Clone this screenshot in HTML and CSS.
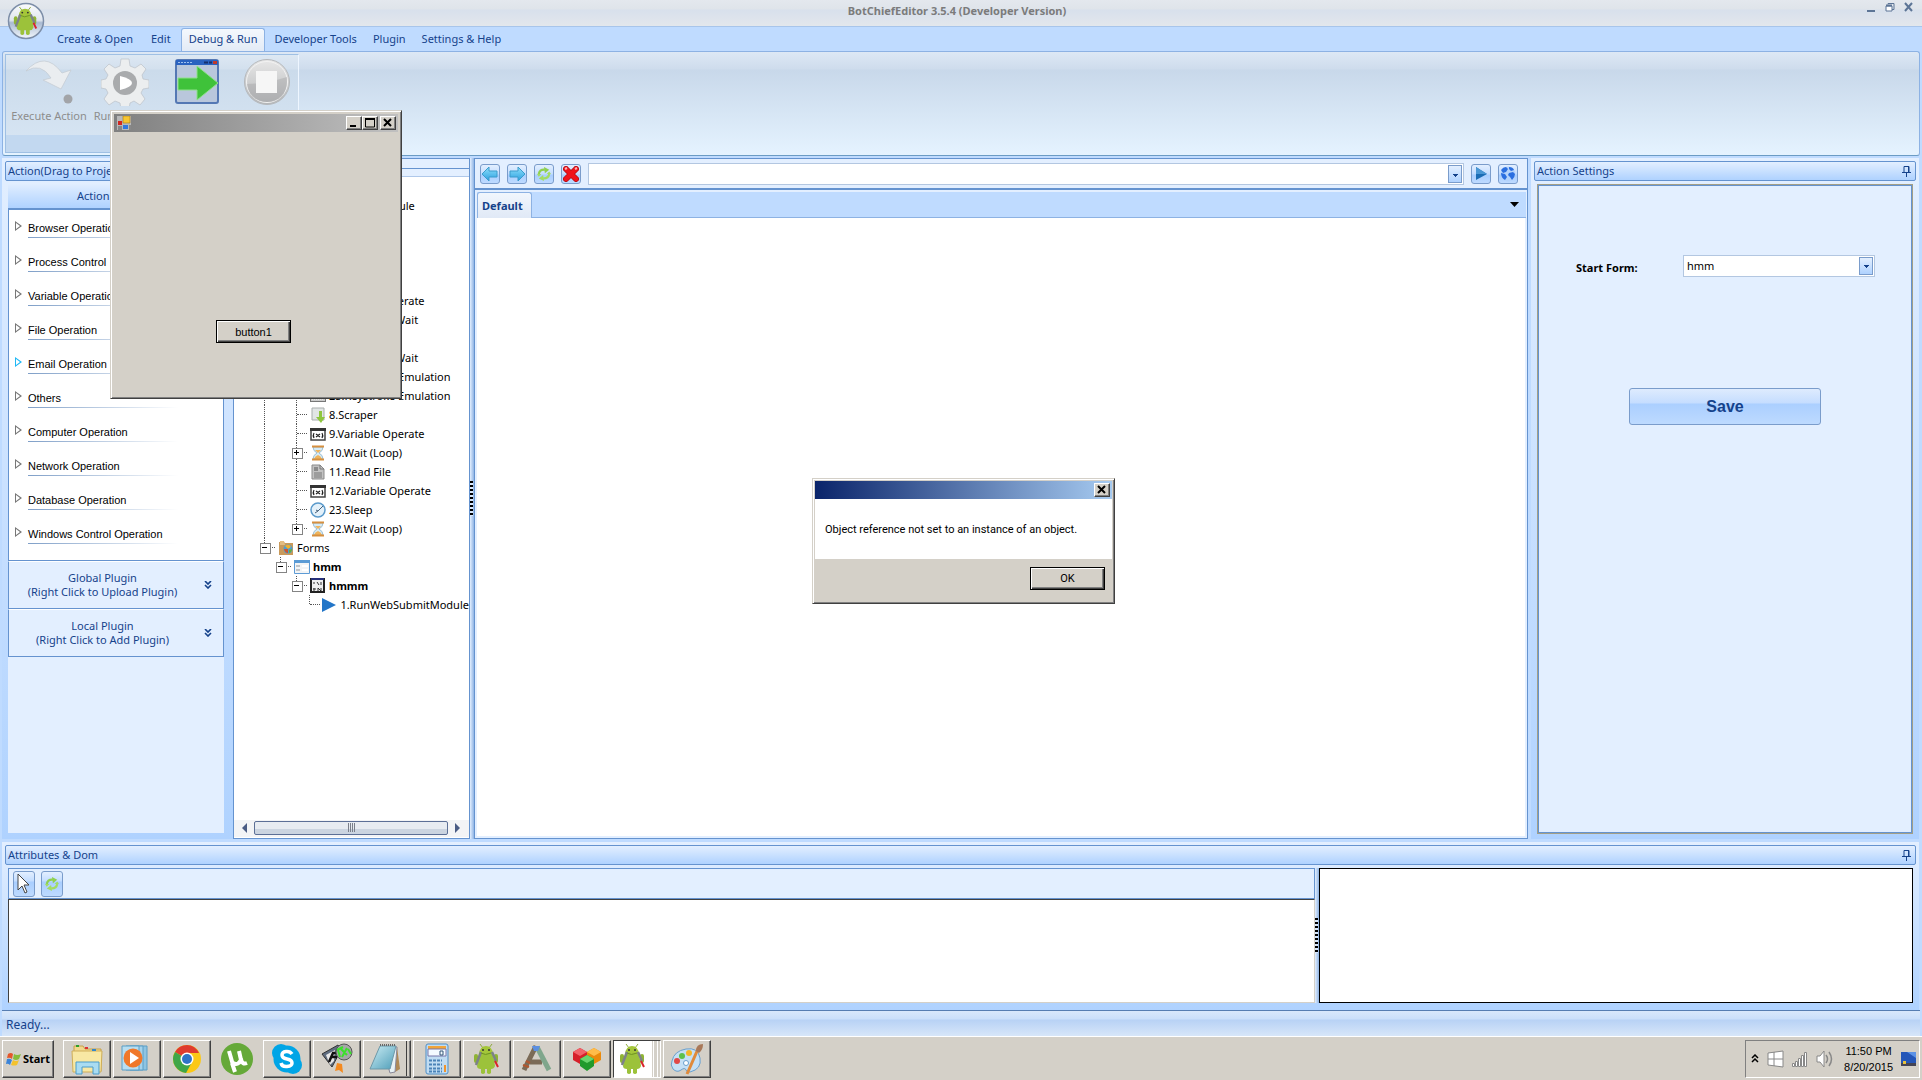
FILE: index.html
```
<!DOCTYPE html>
<html lang="en">
<head>
    <meta charset="utf-8">
    <title>BotChiefEditor 3.5.4 (Developer Version)</title>
    <link rel="stylesheet" href="styles.css">
</head>
<body>

<svg width="0" height="0" class="defs">
    <defs>
        <linearGradient id="gblue" x1="0" y1="0" x2="0" y2="1"><stop offset="0" stop-color="#8fe0fb"/><stop offset="1" stop-color="#2a9fe0"/></linearGradient>
        <linearGradient id="ggrey" x1="0" y1="0" x2="0" y2="1"><stop offset="0" stop-color="#e8e8e8"/><stop offset="1" stop-color="#b4b6b8"/></linearGradient>
        <linearGradient id="gpage" x1="0" y1="0" x2="1" y2="1"><stop offset="0" stop-color="#cdeef5"/><stop offset="1" stop-color="#4d9db8"/></linearGradient>
        <linearGradient id="gorb" x1="0" y1="0" x2="0" y2="1"><stop offset="0" stop-color="#fbfcfd"/><stop offset=".48" stop-color="#dfe5ee"/><stop offset=".55" stop-color="#a9bad2"/><stop offset="1" stop-color="#f4f8fc"/></linearGradient>
        <symbol id="android" viewBox="0 0 30 30">
            <path d="M8 0l3 4M20 0l-3 4" stroke="#8cab38" stroke-width="1"/>
            <path d="M7 10q1-8 7-8t7 8z" fill="#a4c639"/>
            <circle cx="11" cy="6" r="1" fill="#333"/><circle cx="17" cy="6" r="1" fill="#333"/>
            <path d="M7 9h14l2 13q-1 3-4 3v4q-2 2-4 0v-4h-2v4q-2 2-4 0v-4q-4 0-4-3z" fill="#9cc23a"/>
            <rect x="2" y="10" width="4" height="9" rx="2" fill="#8fb434"/><rect x="22" y="10" width="4" height="9" rx="2" fill="#8fb434"/>
            <path d="M4 21l5-13M20 8l4 9" stroke="#7d8288" stroke-width="2.500"/>
            <path d="M23 17l3 6" stroke="#d9232c" stroke-width="2"/>
            <path d="M9 9q4 3 10 0" stroke="#6f9421" fill="none"/>
        </symbol>
        <symbol id="recycle" viewBox="0 0 16 16">
            <path d="M2 8Q3 3 8 3h1" fill="none" stroke="#8fd04f" stroke-width="2.500"/>
            <path d="M8 0l6 3-5 4z" fill="#8fd04f"/>
            <path d="M14 8q-1 5-6 5H7" fill="none" stroke="#a3dc62" stroke-width="2.500"/>
            <path d="M8 16l-6-3 5-4zM0 8h5L2 11zM11 8h5l-2-3z" fill="#a3dc62"/>
        </symbol>
        <symbol id="pin" viewBox="0 0 9 11"><path d="M2 .500h5v6H2zM0 6.500h9M4.500 7v4M6.500 1v6" stroke="#15428b" fill="none"/></symbol>
        <symbol id="hourglass" viewBox="0 0 16 16">
            <path d="M3 2q0 4 4 6-4 2-4 6h10q0-4-4-6 4-2 4-6z" fill="#d5ebf7" stroke="#84acc4" stroke-width=".7"/>
            <path d="M5 5h6L8 8zM4 14q1-3 4-4 3 1 4 4z" fill="#efb45d"/>
            <path d="M2 1.500h12M2 14.500h12" stroke="#d68f3f" stroke-width="2"/>
        </symbol>
        <symbol id="variable" viewBox="0 0 16 16">
            <path d="M1 3h14v11H1z" fill="#fff" stroke="#444" stroke-width="1.500"/><path d="M0 2h16v3H0z" fill="#333"/>
            <path d="M4 7q-1.500 2.500 0 5M12 7q1.500 2.500 0 5M6 8l4 3M10 8l-4 3" stroke="#222" fill="none" stroke-width="1.200"/>
        </symbol>
        <symbol id="keyboard" viewBox="0 0 16 16"><rect x=".5" y="4.500" width="15" height="9" fill="#ccc" stroke="#777"/><path d="M2 7h12M2 9h12M2 11h12" stroke="#fff" stroke-dasharray="1 1"/></symbol>
        <symbol id="chevrons" viewBox="0 0 8 8"><path d="M1 0l3 3 3-3M1 4l3 3 3-3" fill="none" stroke="#15428b" stroke-width="1.600"/></symbol>
    </defs>
</svg>

<div class="titlebar">
    <span></span>
    <h1>BotChiefEditor 3.5.4 (Developer Version)</h1>
    <div class="winbuttons">
        <svg width="10" height="12"><path d="M1 10h8" stroke="#5d7596" stroke-width="2"/></svg>
        <svg width="10" height="12"><path d="M3 3.500V2.500h6v6H7" fill="none" stroke="#5d7596"/><path d="M1 5h6v5H1z" fill="#fff" stroke="#5d7596"/><path d="M1 4.500h6" stroke="#5d7596" stroke-width="2"/></svg>
        <svg width="10" height="12"><path d="M1 2l7 8M8 2l-7 8" stroke="#5d7596" stroke-width="2"/></svg>
    </div>
    <button class="orb" aria-label="Menu">
        <svg width="38" height="38" viewBox="0 0 38 38"><circle cx="19" cy="19" r="17.500" fill="url(#gorb)" stroke="#7d8ea8" stroke-width="1.500"/><use href="#android" x="5" y="5" width="28" height="28"/></svg>
    </button>
</div>

<nav class="tabs">
    <a href="#">Create &amp; Open</a>
    <a href="#">Edit</a>
    <a href="#" class="active">Debug &amp; Run</a>
    <a href="#">Developer Tools</a>
    <a href="#">Plugin</a>
    <a href="#">Settings &amp; Help</a>
</nav>

<div class="ribbon">
    <div class="group">
        <div class="tools">
            <button class="tool">
                <svg width="48" height="48" viewBox="0 0 48 48"><path d="M1 13Q20-8 37 15l9-3-10 19-18-9 8-2Q16 4 1 13z" fill="#eaedf0" stroke="#c3cad1" stroke-width=".7"/><circle cx="43" cy="41" r="4.500" fill="#a2a4a8"/></svg>
                Execute Action
            </button>
            <button class="tool">
                <svg width="48" height="48" viewBox="0 0 48 48">
                    <path d="M20 1h8l1 7 5 2 6-4 5 5-4 6 1 4 6 1v8l-6 1-2 4 4 6-5 6-6-4-4 2-1 6h-8l-1-6-5-2-6 4-5-6 4-6-2-4-5-1v-8l5-1 2-4-4-6 5-5 6 4 5-2z" fill="#eceeef" stroke="#bcc2c8" stroke-width=".7"/>
                    <circle cx="24" cy="25" r="12" fill="#a9abad"/><path d="M19 18q12 3 12 7t-12 7z" fill="#fff"/>
                </svg>
                Run Module
            </button>
            <button class="tool" aria-label="Application">
                <svg width="44" height="46" viewBox="0 0 44 46"><rect x="1" y="2" width="42" height="43" rx="2" fill="#b9c7dc" stroke="#5478b4" stroke-width="2"/><path d="M1 2h42v5H1z" fill="#2a62c0"/><path d="M3 4.500h15" stroke="#9fc0ee" stroke-dasharray="2 1"/><path d="M29 4.500h4M34 4.500h3" stroke="#16316e" stroke-width="2"/><path d="M38 3h4v3h-4z" fill="#c0392b"/><path d="M3 20h19V8l21 17-21 17V32H3z" fill="#3fc23a" stroke="#8fe08a" stroke-width="1"/></svg>
            </button>
            <button class="tool" aria-label="Stop">
                <svg width="48" height="48" viewBox="0 0 48 48"><circle cx="24" cy="24" r="22.500" fill="url(#ggrey)" stroke="#b5b8bb"/><circle cx="24" cy="24" r="20.500" fill="none" stroke="#f2f2f2"/><path d="M4 26q18 0 40-7 1 25-20 25-18 0-20-18z" fill="#9fa1a3" opacity=".4"/><path d="M13 13h21v22H13z" fill="#f6f6f6"/></svg>
            </button>
        </div>
        <div class="groupfoot"></div>
    </div>
</div>

<div class="workspace">

    <div class="actions">
        <h2 class="panelhead">Action(Drag to Project)</h2>
        <div class="accordion">
            <button class="acchead">Action</button>
            <ul class="oplist">
                <li>Browser Operation</li>
                <li>Process Control</li>
                <li>Variable Operation</li>
                <li>File Operation</li>
                <li class="hot">Email Operation</li>
                <li>Others</li>
                <li>Computer Operation</li>
                <li>Network Operation</li>
                <li>Database Operation</li>
                <li>Windows Control Operation</li>
            </ul>
            <button class="plugin"><span>Global Plugin<br>(Right Click to Upload Plugin)</span><svg width="8" height="8"><use href="#chevrons"/></svg></button>
            <button class="plugin"><span>Local Plugin<br>(Right Click to Add Plugin)</span><svg width="8" height="8"><use href="#chevrons"/></svg></button>
        </div>
    </div>

    <div class="project">
        <div class="projecthead"></div>
        <ul class="tree">
            <li><i class="trunk"></i><i></i><i></i></li>
            <li><i class="trunk"></i><i class="toggle">−</i><svg></svg>WebSubmit Module</li>
            <li><i class="trunk"></i></li>
            <li><i class="trunk"></i></li>
            <li><i class="trunk"></i></li>
            <li><i class="trunk"></i></li>
            <li><i class="trunk"></i><i></i><i class="trunk tee"></i><svg><use href="#variable"/></svg>2.Variable Operate</li>
            <li><i class="trunk"></i><i></i><i class="trunk tee"></i><svg><use href="#hourglass"/></svg>3.Page Load Wait</li>
            <li><i class="trunk"></i><i></i><i class="trunk"></i></li>
            <li><i class="trunk"></i><i></i><i class="trunk tee"></i><svg><use href="#hourglass"/></svg>5.Page Load Wait</li>
            <li><i class="trunk"></i><i></i><i class="trunk tee"></i><svg><use href="#keyboard"/></svg>24.Keystroke Emulation</li>
            <li><i class="trunk"></i><i></i><i class="trunk tee"></i><svg><use href="#keyboard"/></svg>25.Keystroke Emulation</li>
            <li><i class="trunk"></i><i></i><i class="trunk tee"></i><svg viewBox="0 0 16 16"><path d="M2 1h12v12H2z" fill="#e2e6e6" stroke="#a8adad"/><path d="M9 4h3v6h3l-4 6-5-6h3z" fill="#8ec63f"/></svg>8.Scraper</li>
            <li><i class="trunk"></i><i></i><i class="trunk tee"></i><svg><use href="#variable"/></svg>9.Variable Operate</li>
            <li><i class="trunk"></i><i></i><i class="trunk toggle">+</i><svg><use href="#hourglass"/></svg>10.Wait (Loop)</li>
            <li><i class="trunk"></i><i></i><i class="trunk tee"></i><svg viewBox="0 0 16 16"><path d="M2 1h8l4 4v10H2z" fill="#c2c2c2" stroke="#8b8b8b"/><path d="M4 3h4v4H4z" fill="#8a8a8a"/><path d="M4 9h8M4 11h8M4 13h8M10 1v4h4" stroke="#777" fill="none"/></svg>11.Read File</li>
            <li><i class="trunk"></i><i></i><i class="trunk tee"></i><svg><use href="#variable"/></svg>12.Variable Operate</li>
            <li><i class="trunk"></i><i></i><i class="trunk tee"></i><svg viewBox="0 0 16 16"><circle cx="8" cy="8" r="7" fill="#e4f1fa" stroke="#5a9acb" stroke-width="1.500"/><path d="M13 4L8 9l-2-1M5 11l3-2" stroke="#47617a" fill="none"/></svg>23.Sleep</li>
            <li><i class="trunk"></i><i></i><i class="trunk toggle last">+</i><svg><use href="#hourglass"/></svg>22.Wait (Loop)</li>
            <li><i class="trunk toggle last">−</i><svg viewBox="0 0 16 16"><path d="M1 2h5l1 1h8v12H1z" fill="#c99a5b"/><path d="M2 1h4l1 4H2z" fill="#e3bd81"/><circle cx="10" cy="9" r="4.500" fill="#4b9ed4"/><path d="M7 6q4-3 6 1l-3 2z" fill="#f1b12c"/><path d="M6 9l4 0 0 4q-3 0-4-4z" fill="#d4542c"/><path d="M11 10l3-1q0 3-3 4z" fill="#68ad3b"/></svg>Forms</li>
            <li class="bold"><i></i><i class="trunk toggle last">−</i><svg viewBox="0 0 16 16"><path d="M.500 1.500h15v13H.500z" fill="#f2f4f6" stroke="#5d9bd5"/><path d="M0 1h16v3H0z" fill="#5b9bd5"/><path d="M2 7h4M2 11h4" stroke="#c0c4c8" stroke-width="2"/><path d="M8 6h6v2H8zM8 10h6v2H8z" fill="#fff"/></svg>hmm</li>
            <li class="bold"><i></i><i></i><i class="trunk toggle last">−</i><svg viewBox="0 0 16 16"><path d="M1 1h13v13H1z" fill="#eee" stroke="#222" stroke-width="2"/><path d="M1 1h13" stroke="#26307a" stroke-width="2"/><path d="M3 5h2M7 4l2 3M11 4v3M4 10v3M3 11h3M8 13v-3l3 3v-3" stroke="#333" fill="none"/></svg>hmmm</li>
            <li><i></i><i></i><i></i><i class="trunk tee last"></i><svg viewBox="0 0 16 16"><path d="M1 1l14 7-14 7z" fill="#2376c8"/></svg>1.RunWebSubmitModule</li>
        </ul>
        <div class="hscroll">
            <svg width="7" height="10"><path d="M6 0v10L1 5z" fill="#4a5c84"/></svg>
            <div class="thumb"><i></i><i></i><i></i><i></i></div>
            <svg width="7" height="10"><path d="M1 0v10l5-5z" fill="#4a5c84"/></svg>
        </div>
    </div>

    <div class="splitter"><i></i></div>

    <div class="browser">
        <div class="address">
            <button class="ibtn" aria-label="Back"><svg width="16" height="16"><path d="M0 8l7-7v4h8v6H7v4z" fill="url(#gblue)" stroke="#3a9ccc"/></svg></button>
            <button class="ibtn" aria-label="Forward"><svg width="16" height="16"><path d="M16 8L9 1v4H1v6h8v4z" fill="url(#gblue)" stroke="#3a9ccc"/></svg></button>
            <button class="ibtn" aria-label="Refresh"><svg width="14" height="14"><use href="#recycle"/></svg></button>
            <button class="ibtn" aria-label="Stop loading"><svg width="16" height="16"><path d="M3 3l10 10M13 3L3 13" stroke="#b40f16" stroke-width="6" stroke-linecap="round"/><path d="M3 3l10 10M13 3L3 13" stroke="#f0131c" stroke-width="4.500" stroke-linecap="round"/><path d="M12 3l2-1M2 3l2-1" stroke="#ffb3b5" stroke-width="2"/></svg></button>
            <div class="combo wide">
                <input type="text" aria-label="Address">
                <button class="drop" aria-label="History"></button>
            </div>
            <button class="ibtn" aria-label="Go"><svg width="14" height="16"><path d="M2 1l11 7-11 6z" fill="#1b6db5"/><path d="M2 1l11 7H2z" fill="#4a97d4"/></svg></button>
            <button class="ibtn" aria-label="Open in browser"><svg width="16" height="16"><circle cx="8" cy="8" r="7.500" fill="#b4d3fb"/><path d="M1 4q2-3 5-3l2 2-2 3-3 1zM1 7l4 1 2 3-2 3Q1 12 1 7zM9 1q4 0 5 3l-3 1-2-2zM9 7l4-1 2 2q0 3-3 6l-2-3-2-2z" fill="#2b6fe0"/></svg></button>
        </div>
        <div class="doctabs">
            <button class="doctab">Default</button>
            <svg width="9" height="6"><path d="M0 0h9L4.500 5z" fill="#000"/></svg>
        </div>
        <div class="page"></div>
    </div>

    <div class="settings">
        <h2 class="panelhead">Action Settings <svg width="9" height="11"><use href="#pin"/></svg></h2>
        <form class="settingsbox">
            <div class="field">
                <label for="startform">Start Form:</label>
                <select id="startform" class="combo"><option>hmm</option></select>
            </div>
            <button type="button" class="save">Save</button>
        </form>
    </div>
</div>

<div class="attributes">
    <h2 class="panelhead">Attributes &amp; Dom <svg width="9" height="11"><use href="#pin"/></svg></h2>
    <div class="attrbody">
        <div class="attrleft">
            <div class="attrtools">
                <button class="ibtn tall" aria-label="Pick"><svg width="14" height="22"><path d="M1 1v16l4-4 3 7 2-1-3-7h5z" fill="#fff" stroke="#444"/></svg></button>
                <button class="ibtn tall" aria-label="Reload"><svg width="14" height="14"><use href="#recycle"/></svg></button>
            </div>
            <div class="attrlist"></div>
        </div>
        <div class="splitter thin"><i></i></div>
        <div class="attrdom"></div>
    </div>
</div>

<div class="status">Ready...</div>

<div class="taskbar">
    <button class="start">
        <svg width="16" height="14" viewBox="0 0 16 14"><path d="M2 2q3-2 5 0L6 7Q4 5 1 6z" fill="#e4572b"/><path d="M8 2q3 2 7 0l-2 5q-3 2-6 0z" fill="#86bc3a"/><path d="M1 7q3-1 5 1l-2 5q-2-2-4-1z" fill="#3b84d8"/><path d="M7 8q3 2 6 0l-2 5q-3 1-6 0z" fill="#f4c22c"/></svg>
        Start
    </button>
    <button class="task" aria-label="Explorer"><svg width="34" height="32" viewBox="0 0 34 32"><path d="M4 3h9l2 3h16v22H4z" fill="#f1d88c" stroke="#c6a04b"/><path d="M2 8h30l-1 21H3z" fill="#f8e8a4" stroke="#cfae58"/><path d="M6 3h3" stroke="#2ca02c" stroke-width="2"/><path d="M15 5h3" stroke="#d33" stroke-width="2"/><path d="M22 7h4" stroke="#38c" stroke-width="2"/><path d="M6 31V19h23v12h-6v-7H12v7z" fill="#a9dcf2" stroke="#4a9ccb"/></svg></button>
    <button class="task" aria-label="Media player"><svg width="32" height="30" viewBox="0 0 32 30"><path d="M9 2h17v24H9z" fill="#8fc4e2" stroke="#5b9ec6"/><path d="M5 2h17v24H5z" fill="#a5d3ec" stroke="#5b9ec6"/><path d="M1 2h17v24H1z" fill="#b8def1" stroke="#5b9ec6"/><circle cx="12" cy="14" r="9.500" fill="#f0782a"/><path d="M9 8l9 6-9 6z" fill="#fff"/></svg></button>
    <button class="task" aria-label="Chrome"><svg width="30" height="30" viewBox="0 0 30 30"><circle cx="15" cy="15" r="14" fill="#fbc816"/><path d="M15 15L3 8Q7 1 15 1t12 8H15z" fill="#df3b2f"/><path d="M3 8q-4 7 0 14 4 6 11 7l6-11-5-3z" fill="#3fa648"/><circle cx="15" cy="15" r="6.500" fill="#fff"/><circle cx="15" cy="15" r="5" fill="#2f74c8"/></svg></button>
    <button class="task flat" aria-label="uTorrent"><svg width="32" height="32" viewBox="0 0 32 32"><circle cx="16" cy="16" r="16" fill="#65a938"/><path d="M8 8l4 14M12 20q5 3 8-3l-2-9M20 16q1 6 6 4M11 20l3 9" stroke="#fff" stroke-width="4" fill="none"/></svg></button>
    <button class="task" aria-label="Skype"><svg width="30" height="30" viewBox="0 0 30 30"><circle cx="9" cy="9" r="9" fill="#00a5e6"/><circle cx="21" cy="21" r="9" fill="#00a5e6"/><circle cx="15" cy="15" r="13.500" fill="#00a5e6"/><path d="M20 10q-2-3-6-2.500-4 .500-4 3.500t5 4 5 4-5 3.500-6-3.500" fill="none" stroke="#fff" stroke-width="3.500"/></svg></button>
    <button class="task" aria-label="FlashFXP"><svg width="32" height="32" viewBox="0 0 32 32"><path d="M1 11L17 2l3 5-9 17z" fill="#5f6d80" stroke="#333"/><path d="M5 12l9-5-1 11-4 4z" fill="#e8e8e8"/><path d="M8 19l4-9h6M10 14h6" stroke="#111" stroke-width="2.500" fill="none"/><circle cx="23" cy="9" r="8" fill="#a6a8a8" stroke="#555"/><path d="M16 7l6-3M17 7l2 7M20 6l6 6M26 5l-5 9M27 6l3 5" stroke="#3be02b" stroke-width="2"/><path d="M16 20l5 1 1 9-4-3-4 1z" fill="#f48a1f"/></svg></button>
    <button class="task stack" aria-label="Notepad"><svg width="32" height="32" viewBox="0 0 32 32"><path d="M28 4l3 22-5 3z" fill="#b08a56"/><path d="M13 3l15 1-2 25-5 1z" fill="#e8f2f5" stroke="#889"/><path d="M11 3h16l-6 23H1z" fill="url(#gpage)" stroke="#6d98a8"/><path d="M11 2h16" stroke="#666" stroke-width="2" stroke-dasharray="1 1"/></svg></button>
    <button class="task" aria-label="Calculator"><svg width="24" height="32" viewBox="0 0 24 32"><rect x="1" y="1" width="22" height="30" rx="2" fill="#c0dcf2" stroke="#4e8fc7"/><path d="M3 3h18v3H3z" fill="#f0a43a"/><path d="M3 6h18v7H3z" fill="#f4faff" stroke="#77a"/><path d="M15 8h3v4h-3z" fill="none" stroke="#357"/><path d="M4 17.500h13M4 21.500h13M4 25.500h13M4 28.500h13" stroke="#4b83b8" stroke-width="2" stroke-dasharray="3 1"/><path d="M19 22h2v7h-2z" fill="#f0932b"/></svg></button>
    <button class="task" aria-label="BotChief"><svg width="30" height="30"><use href="#android"/></svg></button>
    <button class="task" aria-label="ARK"><svg width="32" height="30" viewBox="0 0 32 30"><path d="M15 2L3 26M9 18h12" stroke="#7b6b57" stroke-width="5"/><path d="M16 3l12 23" stroke="#7fa68c" stroke-width="5"/><path d="M2 21l6 2M5 17l4 2" stroke="#b3562e" stroke-width="2"/><path d="M11 2h8l-2 5h-4z" fill="#5b8fe0"/></svg></button>
    <button class="task" aria-label="Cubes"><svg width="30" height="26" viewBox="0 0 30 26"><path d="M1 6l7-4 7 4v8l-7 4-7-4z" fill="#d6202a"/><path d="M1 6l7-4 7 4-7 4z" fill="#f2636a"/><path d="M15 6l7-4 7 4v8l-7 4-7-4z" fill="#ea8a0c"/><path d="M15 6l7-4 7 4-7 4z" fill="#ffbc4a"/><path d="M8 13l7-4 7 4v7l-7 5-7-5z" fill="#219a2c"/><path d="M8 13l7-4 7 4-7 4z" fill="#69d46c"/></svg></button>
    <button class="task active" aria-label="BotChief Editor"><svg width="30" height="30"><use href="#android"/></svg></button>
    <button class="task" aria-label="Paint"><svg width="34" height="32" viewBox="0 0 34 32"><path d="M2 18Q4 8 16 6t14 9-10 14q-3 1-4-2t-5 0-8-1q-3-4-1-8z" fill="#c5e0f5" stroke="#6a9fcc"/><circle cx="7" cy="18" r="3" fill="#e04848"/><circle cx="12" cy="13" r="3" fill="#5ec04c"/><circle cx="19" cy="10" r="3" fill="#f5b52a"/><circle cx="16" cy="20" r="2.500" fill="#fff" stroke="#6a9fcc"/><path d="M28 6L17 31" stroke="#e08a3a" stroke-width="3"/><path d="M26 8q0-7 7-7 0 6-4 9z" fill="#a9795a"/></svg></button>
    <div class="tray">
        <svg width="8" height="10"><path d="M1 4l3-3 3 3M1 8l3-3 3 3" fill="none" stroke="#000" stroke-width="1.500"/></svg>
        <svg width="17" height="18"><path d="M1 3l15-2v16L1 15zM7 2v14M1 9h15" fill="#fff" stroke="#888"/></svg>
        <svg width="16" height="16"><path d="M.500 12.500h2v3h-2zM3.500 10.500h2v5h-2zM6.500 7.500h2v8h-2zM9.500 4.500h2v11h-2zM12.500 1.500h2v14h-2z" fill="#fff" stroke="#888"/></svg>
        <svg width="17" height="18"><path d="M1 6h3l4-5v16l-4-5H1z" fill="#fff" stroke="#888"/><path d="M10 5q3 4 0 8M13 2q5 7 0 14" fill="none" stroke="#888" stroke-width="1.500"/></svg>
        <div class="clock">11:50 PM<br>8/20/2015</div>
        <svg width="15" height="16"><path d="M0 1h15v11H0z" fill="#2456b8"/><path d="M6 1h9v6z" fill="#5c92e6"/><path d="M0 12h15v3H0z" fill="#445"/><path d="M2 10h3v3H2z" fill="#e8c23a"/></svg>
    </div>
</div>

<div class="window form">
    <div class="caption">
        <svg width="14" height="14"><path d="M0 0h14v14H0z" fill="#b8b8b8"/><path d="M6 0h7v7H6z" fill="#f7c531" stroke="#a77a10" stroke-width=".6"/><path d="M1 5h4v4H1z" fill="#d3271f"/><path d="M6 9h5v4H6z" fill="#2f78e0"/><path d="M1 10h4v4H1zM12 9h2v5h-2z" fill="#888"/></svg>
        <span></span>
        <button aria-label="Minimize"><svg width="10" height="10"><path d="M1 8h6" stroke="#000" stroke-width="2"/></svg></button>
        <button aria-label="Maximize"><svg width="10" height="10"><path d="M.500 1h9v8h-9z" fill="none" stroke="#000"/><path d="M0 1h10" stroke="#000" stroke-width="2"/></svg></button>
        <button class="close" aria-label="Close"><svg width="10" height="10"><path d="M1 1l7 7M8 1L1 8" stroke="#000" stroke-width="2"/></svg></button>
    </div>
    <div class="formbody"><button class="classic">button1</button></div>
</div>

<div class="window msgbox">
    <div class="caption">
        <span></span>
        <button class="close" aria-label="Close"><svg width="10" height="10"><path d="M1 1l7 7M8 1L1 8" stroke="#000" stroke-width="2"/></svg></button>
    </div>
    <p>Object reference not set to an instance of an object.</p>
    <div class="msgfoot"><button class="classic">OK</button></div>
</div>

</body>
</html>
```
FILE: styles.css
```
* {
    box-sizing: border-box;
}

body {
    margin: 0;
    height: 100vh;
    display: flex;
    flex-direction: column;
    overflow: hidden;
    background: #bfdbff;
    color: #000000;
    font-family: "Noto Sans", "Open Sans", sans-serif;
    font-size: 11px;
    line-height: 14px;
}

button, input, select {
    font: inherit;
    color: inherit;
    margin: 0;
    padding: 0;
    border: none;
    background: none;
}

h1, h2, ul, p {
    margin: 0;
    padding: 0;
    font-size: 11px;
    list-style: none;
}

svg {
    flex: none;
    display: block;
}

.defs {
    position: absolute;
}

/* title bar and ribbon */

.titlebar {
    position: relative;
    flex: none;
    height: 27px;
    display: grid;
    grid-template-columns: 1fr auto 1fr;
    align-items: start;
    padding: 0 8px 0 0;
    background: linear-gradient(#e4e8ee, #dfe4ea 9px, #d8e0ec 10px, #e3e7ec);
    border-bottom: 1px solid #a8c5ea;
}

.titlebar h1 {
    padding-top: 4px;
    color: #7b7b7b;
}

.winbuttons {
    display: flex;
    justify-content: flex-end;
    gap: 9px;
    padding-top: 1px;
}

.orb {
    position: absolute;
    left: 7px;
    top: 2px;
}

.tabs {
    flex: none;
    height: 24px;
    display: flex;
    align-items: flex-end;
    padding-left: 49px;
}

.tabs a {
    height: 23px;
    padding: 4px 8px 0;
    margin-right: 2px;
    color: #15428b;
    text-decoration: none;
}

.tabs a.active {
    padding: 3px 7px 0;
    background: linear-gradient(#f4f8fd, #e3ebf6);
    border: 1px solid #8db2e3;
    border-bottom: none;
    border-radius: 3px 3px 0 0;
}

.tabs a.active ~ a {
    padding: 4px 7px 0;
}

.ribbon {
    flex: none;
    height: 105px;
    margin: 0 2px 2px;
    padding: 2px;
    background: linear-gradient(#dde8f5, #cedcec 17px, #c8d8ea 18px, #e5f3ff);
    border: 1px solid #8db2e3;
    border-bottom-color: #6b9cc4;
    border-radius: 3px;
}

.group {
    width: 294px;
    height: 99px;
    display: flex;
    flex-direction: column;
    justify-content: space-between;
    border: 1px solid #9fc0e4;
    border-right-color: #eef6ff;
    background: linear-gradient(#dde8f3, #d3e0ee 14px, #cbdbeb 15px, #d8e6f4);
}

.tools {
    display: flex;
    gap: 16px;
    padding: 3px 6px 0;
}

.tool {
    display: flex;
    flex-direction: column;
    align-items: center;
    gap: 3px;
    width: 46px;
    color: #8d8d8d;
    white-space: nowrap;
}

.tool:first-child {
    width: 74px;
}

.tool:nth-child(3) {
    margin: 0 8px 0 10px;
}

.groupfoot {
    height: 17px;
    background: #c2d8f0;
}

/* working area */

.workspace {
    flex: 1;
    min-height: 0;
    display: flex;
    padding: 0 3px 3px 2px;
}

.panelhead {
    display: flex;
    justify-content: space-between;
    align-items: center;
    height: 20px;
    padding: 0 4px 0 2px;
    color: #15428b;
    font-weight: normal;
    background: linear-gradient(#e3efff, #afd2ff);
    border: 1px solid #6593cf;
    border-radius: 2px;
}

.actions {
    flex: none;
    width: 231px;
    padding: 3px 9px 6px 3px;
    display: flex;
    flex-direction: column;
    background: linear-gradient(#e3efff, #afd2ff);
}

.actions .panelhead {
    margin-right: -3px;
}

.accordion {
    flex: 1;
    margin: 2px 0 0 3px;
    display: flex;
    flex-direction: column;
    background: #e3efff;
}

.acchead {
    height: 27px;
    color: #15428b;
    text-align: left;
    padding-left: 69px;
    background: linear-gradient(#e3efff, #afd2ff);
    border-bottom: 2px solid #6593cf;
}

.oplist {
    height: 351px;
    background: #ffffff;
    border: 1px solid #6593cf;
    border-top: none;
    font-family: "Liberation Sans", Arial, sans-serif;
}

.oplist li {
    height: 34px;
    margin-left: 19px;
    padding-top: 11px;
    background: linear-gradient(90deg, #7f9fc8, #ffffff) 0 27px / 150px 1px no-repeat;
    position: relative;
}

.oplist li::before {
    content: "";
    position: absolute;
    left: -13px;
    top: 11px;
    width: 7px;
    height: 10px;
    background: #777777;
    clip-path: polygon(0 0, 7px 5px, 0 10px, 0 0, 1px 2px, 1px 8px, 5px 5px, 1px 2px);
}

.oplist li.hot::before {
    background: #1fb8f5;
}

.plugin {
    flex: none;
    height: 48px;
    display: flex;
    align-items: center;
    padding-right: 11px;
    color: #15428b;
    border: 1px solid #6593cf;
    border-top-color: #ffffff;
}

.plugin span {
    flex: 1;
    padding-right: 8px;
}

.project {
    flex: none;
    width: 237px;
    display: flex;
    flex-direction: column;
    background: #ffffff;
    border: 1px solid #6593cf;
}

.projecthead {
    flex: none;
    height: 18px;
    background: linear-gradient(#e3efff 9px, #6593cf 9px, #6593cf 10px, #e3efff 10px);
    border-bottom: 1px solid #afc8ea;
}

.tree {
    flex: 1;
    overflow: hidden;
    padding-left: 22px;
}

.tree li {
    display: flex;
    align-items: center;
    height: 19px;
    white-space: nowrap;
}

.tree .bold {
    font-weight: bold;
}

.tree svg {
    width: 16px;
    height: 16px;
    margin: 0 3px 0 6px;
}

.tree i {
    position: relative;
    width: 16px;
    height: 19px;
    font-style: normal;
}

.tree .trunk {
    background: repeating-linear-gradient(#555555 0 1px, #ffffff 1px 2px) 8px 0 / 1px 19px no-repeat;
}

.tree .trunk.last {
    background-size: 1px 10px;
}

.tree .tee::after, .tree .toggle::after {
    content: "";
    position: absolute;
    left: 9px;
    top: 9px;
    width: 10px;
    border-top: 1px dotted #555555;
}

.tree .toggle {
    text-align: center;
    line-height: 19px;
}

.tree .toggle::before {
    content: "";
    position: absolute;
    left: 4px;
    top: 5px;
    width: 9px;
    height: 9px;
    z-index: 1;
    border: 1px solid #848484;
    background: linear-gradient(#000000, #000000) 1px 3px / 5px 1px no-repeat #ffffff;
}

.tree .toggle:not(.last)::before, .tree li:nth-child(19) .toggle::before {
    background: linear-gradient(#000000, #000000) 1px 3px / 5px 1px no-repeat, linear-gradient(#000000, #000000) 3px 1px / 1px 5px no-repeat, #ffffff;
}

.hscroll {
    flex: none;
    height: 17px;
    display: flex;
    align-items: center;
    gap: 6px;
    padding: 0 8px 2px 7px;
    background: #f3f4f6;
    margin-bottom: 1px;
}

.thumb {
    flex: 1;
    height: 14px;
    display: flex;
    justify-content: center;
    align-items: center;
    gap: 1px;
    border: 1px solid #5c6f96;
    border-radius: 2px;
    background: linear-gradient(#e7ebf1 7px, #cbd4e0 7px);
}

.thumb i {
    width: 1px;
    height: 9px;
    background: #7a7f8a;
}

.splitter {
    flex: none;
    width: 4px;
    display: flex;
    align-items: center;
    background: linear-gradient(90deg, #e3efff, #8fb4e4);
}

.splitter i {
    width: 3px;
    height: 35px;
    background: repeating-linear-gradient(#000000 0 2px, #d9e8fd 2px 4px);
}

.browser {
    flex: 1;
    display: flex;
    flex-direction: column;
    background: #e3efff;
    border: 1px solid #6593cf;
}

.address {
    flex: none;
    height: 31px;
    display: flex;
    align-items: center;
    gap: 7px;
    padding: 0 9px 0 5px;
    border-bottom: 2px solid #6593cf;
}

.ibtn {
    flex: none;
    width: 20px;
    height: 20px;
    display: flex;
    align-items: center;
    justify-content: center;
    background: linear-gradient(#e3efff, #c4ddff 9px, #a9ceff 10px, #bedaff);
    border: 1px solid #7a9ccb;
    border-radius: 3px;
}

.combo {
    height: 22px;
    background: #ffffff;
    border: 1px solid #b3c7e1;
}

.wide {
    flex: 1;
    display: flex;
    padding: 1px;
}

.wide input {
    flex: 1;
    min-width: 0;
}

.drop {
    width: 14px;
    border: 1px solid #7a9ccb;
    background: linear-gradient(#15428b, #15428b) 4px 8px / 5px 1px no-repeat, linear-gradient(#15428b, #15428b) 5px 9px / 3px 1px no-repeat, linear-gradient(#15428b, #15428b) 6px 10px / 1px 1px no-repeat, linear-gradient(#e3efff, #afd2ff);
}

.doctabs {
    flex: none;
    height: 27px;
    margin: 1px 1px 0 2px;
    display: flex;
    justify-content: space-between;
    align-items: center;
    padding-right: 7px;
    background: #bfdbff;
    border-top: 1px solid #e3efff;
    border-bottom: 1px solid #8db2e3;
}

.doctab {
    width: 55px;
    height: 26px;
    margin-bottom: -1px;
    text-align: left;
    padding-left: 4px;
    color: #15428b;
    font-weight: bold;
    background: linear-gradient(#f1f6fd, #e0e9f6);
    border: 1px solid #8db2e3;
    border-bottom: none;
    border-radius: 3px 3px 0 0;
}

.page {
    flex: 1;
    margin: 0 2px 2px;
    background: #ffffff;
}

.settings {
    flex: none;
    width: 388px;
    margin-left: 3px;
    padding: 3px 3px 5px;
    display: flex;
    flex-direction: column;
    background: linear-gradient(#e3efff, #afd2ff);
}

.settingsbox {
    flex: 1;
    margin: 3px 3px 0;
    padding: 70px 37px 0 38px;
    background: #e3efff;
    border: 1px solid #a39f86;
    outline: 1px solid #6593cf;
    outline-offset: -2px;
}

.field {
    display: flex;
    justify-content: space-between;
    align-items: center;
}

.field label {
    font-weight: bold;
    padding-top: 4px;
}

select.combo {
    appearance: none;
    width: 192px;
    padding-left: 3px;
    background: linear-gradient(#15428b, #15428b) 180px 9px / 5px 1px no-repeat, linear-gradient(#15428b, #15428b) 181px 10px / 3px 1px no-repeat, linear-gradient(#15428b, #15428b) 182px 11px / 1px 1px no-repeat, linear-gradient(#e3efff, #afd2ff) 176px 2px / 12px 16px no-repeat, linear-gradient(#7a9ccb, #7a9ccb) 175px 1px / 14px 18px no-repeat, #ffffff;
}

.save {
    display: block;
    width: 192px;
    height: 37px;
    margin: 111px 0 0 53px;
    color: #15428b;
    font: bold 16px "Liberation Sans", Arial, sans-serif;
    background: linear-gradient(#deebfe, #c5ddff 14px, #abcfff 15px, #bddaff);
    border: 1px solid #7a9ccb;
    border-radius: 3px;
}

/* lower panel */

.attributes {
    flex: none;
    height: 168px;
    margin: 0 3px 0 2px;
    padding: 3px 3px 7px;
    display: flex;
    flex-direction: column;
    background: linear-gradient(#e3efff, #afd2ff);
}

.attrbody {
    flex: 1;
    display: flex;
    margin: 3px 3px 0;
}

.attrleft {
    flex: 1;
    display: flex;
    flex-direction: column;
}

.attrtools {
    flex: none;
    height: 31px;
    display: flex;
    align-items: center;
    gap: 6px;
    padding-left: 4px;
    background: #e3efff;
    border: 1px solid #6593cf;
}

.tall {
    width: 22px;
    height: 26px;
}

.attrlist {
    flex: 1;
    background: #ffffff;
    border: 1px solid #404040;
    border-right-color: #d4d0c8;
    border-bottom-color: #d4d0c8;
}

.attrdom {
    flex: none;
    width: 594px;
    background: #ffffff;
    border: 1px solid #000000;
}

.status {
    flex: none;
    height: 26px;
    margin: 0 2px;
    padding: 5px 4px 0;
    color: #15428b;
    font-size: 12px;
    line-height: 18px;
    background: linear-gradient(#d9e8fb, #cadffa 8px, #b8d2f5 9px, #d7e6f9);
    border-top: 1px solid #567db1;
}

/* taskbar */

.taskbar {
    flex: none;
    height: 44px;
    display: flex;
    gap: 2px;
    padding: 3px 2px 2px;
    background: #d4d0c8;
    border-top: 1px solid #ffffff;
}

.taskbar > button {
    display: flex;
    align-items: center;
    justify-content: center;
    height: 38px;
    border: 1px solid;
    border-color: #ffffff #404040 #404040 #ffffff;
    box-shadow: inset -1px -1px #808080;
}

.taskbar .start {
    width: 52px;
    margin-right: 7px;
    gap: 1px;
    font-weight: bold;
}

.taskbar .task {
    width: 48px;
}

.taskbar .flat {
    border-color: transparent;
    box-shadow: none;
}

.taskbar .stack {
    padding-right: 4px;
    background: linear-gradient(#404040, #404040) 42px 0 / 1px 38px no-repeat;
}

.taskbar .active {
    padding-right: 8px;
    border-color: #404040 #ffffff #ffffff #404040;
    box-shadow: none;
    background: linear-gradient(90deg, #ffffff 38px, #d4d0c8 38px 39px, #ffffff 39px 40px, #d4d0c8 40px 43px, #ffffff 43px 44px, #d4d0c8 44px);
}

.tray {
    display: flex;
    align-items: center;
    gap: 8px;
    height: 38px;
    margin-left: auto;
    padding: 0 3px 0 5px;
    border: 1px solid;
    border-color: #808080 #ffffff #ffffff #808080;
}

.clock {
    text-align: center;
    line-height: 16px;
    margin-left: 3px;
    font-family: "Liberation Sans", Arial, sans-serif;
}

/* windows floating on the desktop */

.window {
    position: absolute;
    z-index: 2;
    padding: 2px;
    background: #d4d0c8;
    border: 1px solid;
    border-color: #d4d0c8 #404040 #404040 #d4d0c8;
    box-shadow: inset 1px 1px #ffffff, inset -1px -1px #808080;
}

.form {
    left: 110px;
    top: 110px;
    width: 292px;
    height: 289px;
}

.msgbox {
    left: 812px;
    top: 478px;
    width: 303px;
    height: 126px;
    font-family: Roboto, "Noto Sans", sans-serif;
}

.caption {
    height: 18px;
    display: flex;
    align-items: center;
    padding: 0 2px 0 3px;
    background: linear-gradient(90deg, #808080, #c0c0c0);
}

.form .caption {
    margin: 1px 1px 0;
}

.msgbox .caption {
    background: linear-gradient(90deg, #0a246a, #a6caf0);
}

.caption span {
    flex: 1;
}

.caption button {
    display: flex;
    align-items: center;
    justify-content: center;
    width: 16px;
    height: 14px;
    background: #d4d0c8;
    border: 1px solid;
    border-color: #ffffff #404040 #404040 #ffffff;
    box-shadow: inset -1px -1px #808080;
}

.form .close {
    margin-left: 2px;
}

.formbody {
    padding: 188px 0 0 103px;
}

.classic {
    width: 75px;
    height: 23px;
    border: 1px solid #000000;
    box-shadow: inset 1px 1px #ffffff, inset -1px -1px #404040, inset -2px -2px #808080;
}

.formbody .classic {
    font-family: "Liberation Sans", Arial, sans-serif;
}

.msgbox p {
    height: 60px;
    padding: 24px 10px 0;
    background: #ffffff;
}

.msgfoot {
    display: flex;
    justify-content: flex-end;
    padding: 8px 7px 0;
}
```
